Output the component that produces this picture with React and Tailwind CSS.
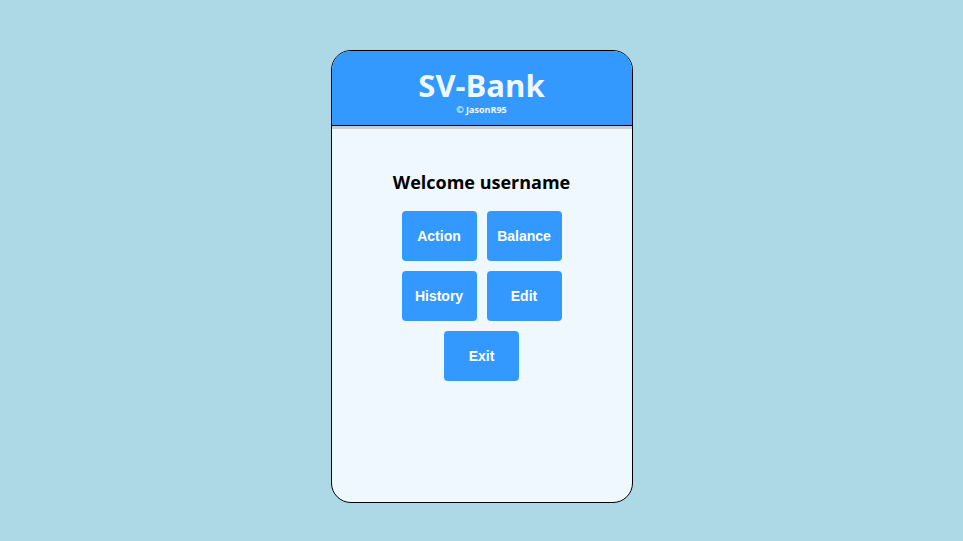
export default function App() {
  const btn =
    "w-[75px] h-[50px] rounded-[4px] bg-[#3399ff] text-white font-bold text-[14px] font-['Liberation_Sans',Arial,sans-serif]";

  return (
    <div className="min-h-screen w-full bg-[#add8e6] flex justify-center pt-[50px]">
      <div className="w-[302px] h-[453px] border border-black rounded-[20px] overflow-hidden bg-[#f0f8ff] flex flex-col">
        <div className="h-[75px] bg-[#3399ff] border-b border-black flex flex-col items-center pt-[19px] text-[#f0f8ff] font-['Open_Sans',sans-serif]">
          <h1 className="text-[31px] font-bold leading-[31px]">SV-Bank</h1>
          <p className="mt-[4px] text-[9px] font-bold leading-[10px]">© JasonR95</p>
        </div>
        <div className="h-[3px] bg-[#c9ced3]" />
        <div className="flex flex-col items-center pt-[40px]">
          <h2 className="text-[18px] font-bold leading-[26px] text-black font-['Open_Sans',sans-serif]">
            Welcome username
          </h2>
          <div className="mt-[16px] flex flex-col items-center gap-[10px]">
            <div className="flex gap-[10px]">
              <button className={btn}>Action</button>
              <button className={btn}>Balance</button>
            </div>
            <div className="flex gap-[10px]">
              <button className={btn}>History</button>
              <button className={btn}>Edit</button>
            </div>
            <button className={btn}>Exit</button>
          </div>
        </div>
      </div>
    </div>
  );
}
